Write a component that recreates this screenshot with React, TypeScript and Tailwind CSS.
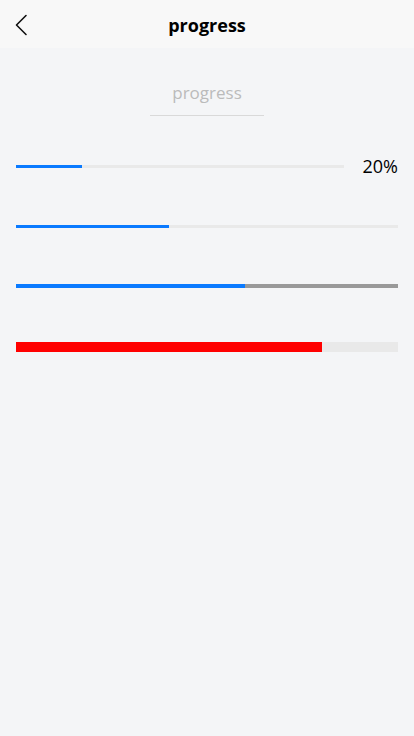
import * as React from "react";

function Bar({
  percent,
  height = "h-[3px]",
  fill = "bg-[#0a7aff]",
  track = "bg-[#e9e9e9]",
}: {
  percent: number;
  height?: string;
  fill?: string;
  track?: string;
}) {
  return (
    <div className={`flex-1 ${height} ${track}`}>
      <div className={`h-full ${fill}`} style={{ width: `${percent}%` }} />
    </div>
  );
}

export default function App() {
  return (
    <div
      className="min-h-[736px] w-full bg-[#f4f5f7] text-black"
      style={{ fontFamily: '"Open Sans", "Noto Sans", sans-serif' }}
    >
      {/* Header */}
      <div className="relative flex h-12 items-center justify-center bg-[#f8f8f8] pt-[2px]">
        <button
          type="button"
          className="absolute left-[12px] top-[12px] p-0.5"
          aria-label="Back"
        >
          <svg width="14" height="22" viewBox="0 0 14 22" fill="none">
            <path
              d="M12 1.5 L2.5 11 L12 20.5"
              stroke="#111"
              strokeWidth="1.6"
              strokeLinecap="round"
              strokeLinejoin="round"
            />
          </svg>
        </button>
        <h1 className="m-0 text-[18px] font-bold leading-none">progress</h1>
      </div>

      {/* Input */}
      <div className="flex justify-center pt-[28px]">
        <input
          className="h-[40px] w-[114px] border-b border-[#d9d9d9] bg-transparent pb-[7px] text-center text-[17px] outline-none placeholder:text-[#bbbbbb]"
          placeholder="progress"
        />
      </div>

      {/* Bars */}
      <div className="flex flex-col px-4 pt-[47px]">
        <div className="flex h-[6px] items-center">
          <div className="flex w-[328px]">
            <Bar percent={20} />
          </div>
          <span className="ml-auto text-[18px] leading-none">20%</span>
        </div>
        <div className="mt-[54px] flex h-[6px] items-center">
          <Bar percent={40} />
        </div>
        <div className="mt-[54px] flex h-[6px] items-center">
          <Bar percent={60} height="h-[4px]" track="bg-[#999999]" />
        </div>
        <div className="mt-[53px] flex items-center">
          <Bar percent={80} height="h-[10px]" fill="bg-[#ff0000]" />
        </div>
      </div>
    </div>
  );
}
